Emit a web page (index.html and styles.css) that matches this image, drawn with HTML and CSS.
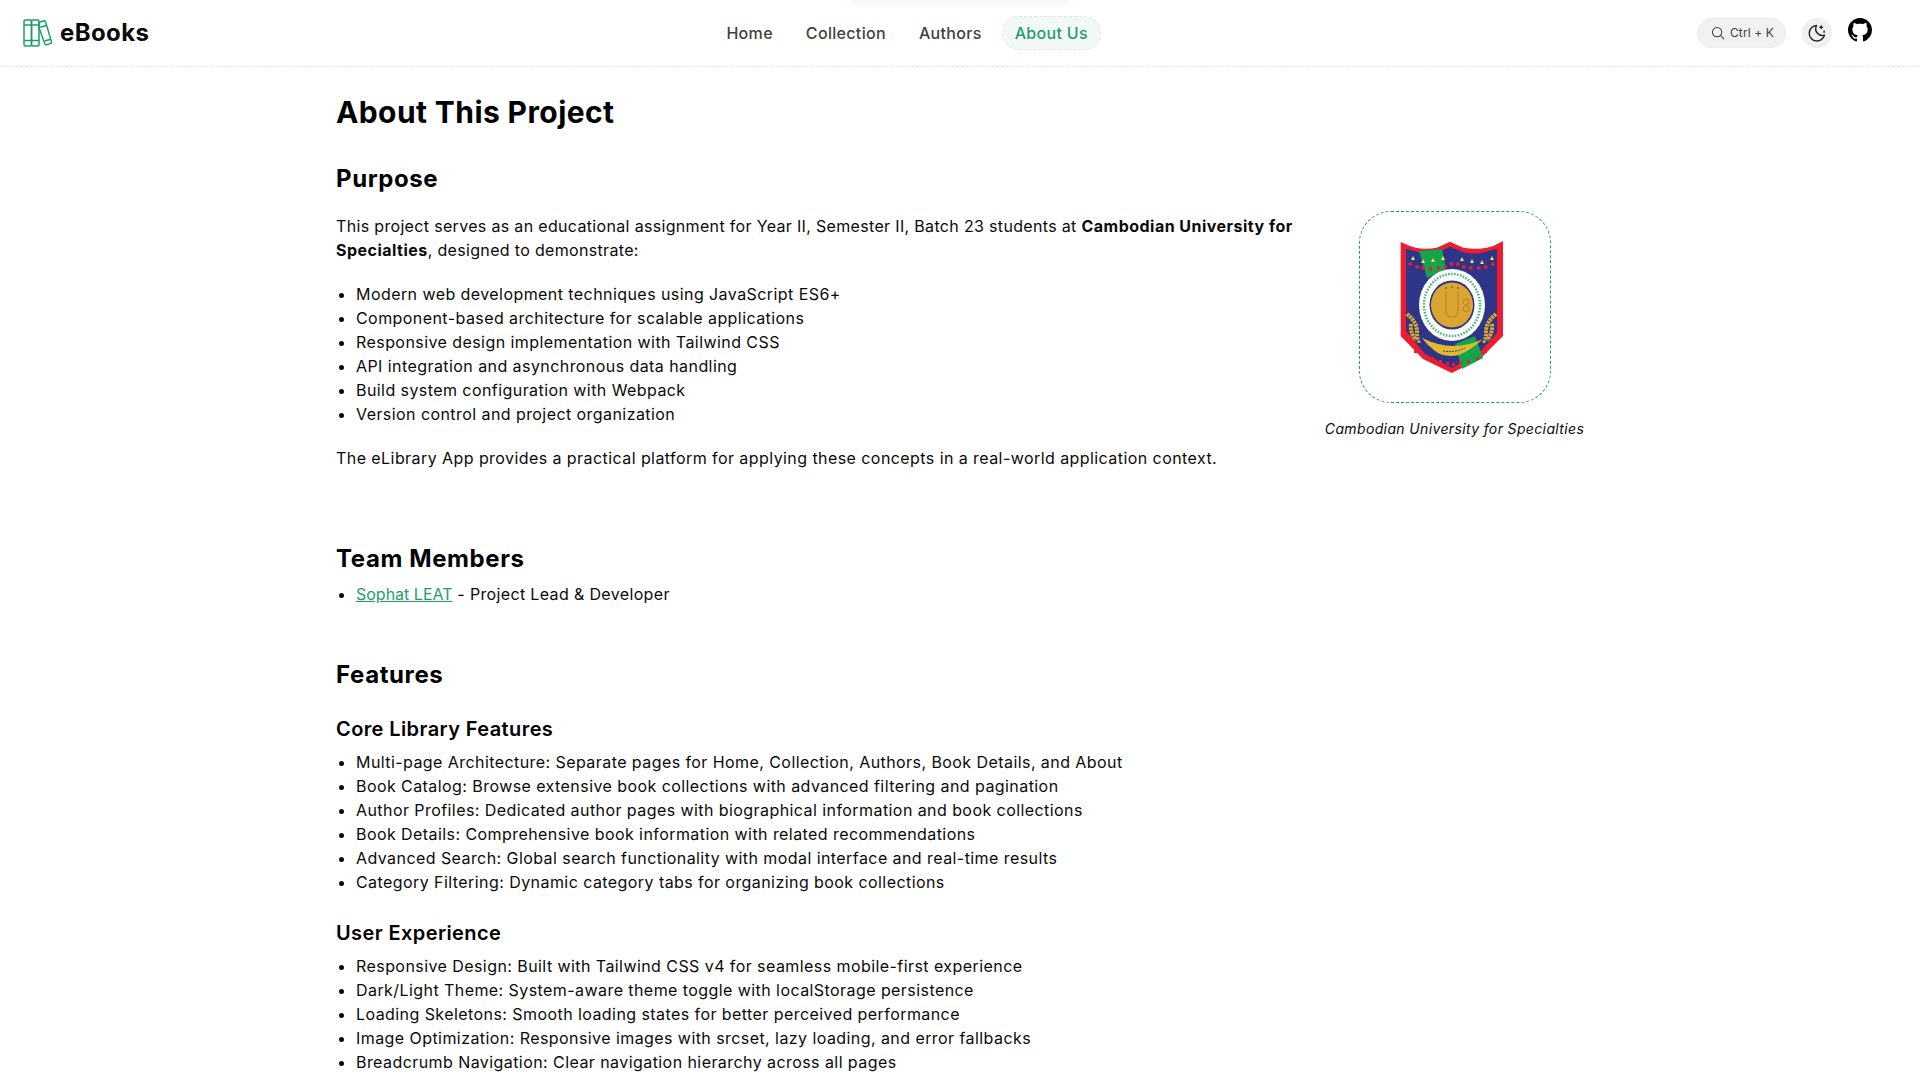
FILE: index.html
```html
<!DOCTYPE html>
<html lang="en">
	<head>
		<meta charset="utf-8">
		<title>About - eBooks</title>
		<link rel="stylesheet" href="styles.css">
	</head>
	<body>
		<div class="top-shadow"></div>
		<header class="topbar">
			<a class="brand" href="#">
				<svg class="brand-icon" viewBox="0 0 29 28" fill="none" stroke="#1f9d68" stroke-width="1.500" stroke-linejoin="round">
					<rect x="1" y="1" width="7.500" height="26" rx="1.500"/>
					<rect x="8.500" y="1" width="7.500" height="26" rx="1.500"/>
					<path d="M1 6h15M1 21.500h15"/>
					<path d="M16 3.500l4.800-1.800q1.200-.3 1.700.9l6 20.200q.3 1.200-.8 1.600l-4.200 1.300q-1.200.3-1.600-.8L16 8.500z"/>
					<path d="M17.200 8.300l6-1.800M21.800 22l5.800-1.800"/>
				</svg>
				<span>eBooks</span>
			</a>
			<nav class="nav">
				<a href="#">Home</a>
				<a href="#">Collection</a>
				<a href="#">Authors</a>
				<a href="#" class="active">About Us</a>
			</nav>
			<div class="tools">
				<button class="search">
					<svg viewBox="0 0 24 24" fill="none" stroke="#444" stroke-width="1.800" stroke-linecap="round"><circle cx="10.500" cy="10.500" r="8"/><path d="M22 22l-5.800-5.800"/></svg>
					<span>Ctrl + K</span>
				</button>
				<button class="theme">
					<svg viewBox="0 0 24 24" fill="none" stroke="#222" stroke-width="1.700" stroke-linecap="round" stroke-linejoin="round"><path d="M11.500 3a9.300 9.300 0 1 0 9.500 11.500 8 8 0 0 1-9.500-11.500z"/><path d="M17 3.500v3M15.500 5h3M20.500 9.500v1.500"/></svg>
				</button>
				<svg class="github" viewBox="0 0 16 16" fill="#000"><path d="M8 0C3.580 0 0 3.580 0 8c0 3.540 2.290 6.530 5.470 7.590.4.070.55-.17.55-.38 0-.19-.01-.82-.01-1.490-2.010.37-2.530-.49-2.690-.94-.09-.23-.48-.94-.82-1.130-.28-.15-.68-.52-.01-.53.630-.01 1.080.58 1.230.82.720 1.210 1.870.87 2.330.66.070-.52.280-.87.510-1.070-1.780-.2-3.640-.89-3.640-3.950 0-.87.310-1.590.82-2.150-.08-.2-.36-1.020.08-2.120 0 0 .67-.21 2.200.82.640-.18 1.320-.27 2-.27s1.360.09 2 .27c1.530-1.040 2.200-.82 2.200-.82.440 1.100.16 1.920.08 2.120.51.560.82 1.270.82 2.150 0 3.070-1.870 3.750-3.650 3.950.29.250.54.730.54 1.480 0 1.070-.01 1.930-.01 2.200 0 .21.150.46.550.38A8.010 8.010 0 0 0 16 8c0-4.420-3.580-8-8-8z"/></svg>
			</div>
		</header>

		<main class="page">
			<h1>About This Project</h1>

			<section class="purpose">
				<h2>Purpose</h2>
				<div class="purpose-row">
					<div class="purpose-text">
						<p class="intro">This project serves as an educational assignment for Year II, Semester II, Batch 23 students at <strong>Cambodian University for Specialties</strong>, designed to demonstrate:</p>
						<ul>
							<li>Modern web development techniques using JavaScript ES6+</li>
							<li>Component-based architecture for scalable applications</li>
							<li>Responsive design implementation with Tailwind CSS</li>
							<li>API integration and asynchronous data handling</li>
							<li>Build system configuration with Webpack</li>
							<li>Version control and project organization</li>
						</ul>
						<p>The eLibrary App provides a practical platform for applying these concepts in a real-world application context.</p>
					</div>
					<figure class="crest">
						<div class="crest-box">
							<svg class="crest-logo" viewBox="0 0 105 133">
								<!-- shield -->
								<path d="M1.700 1L11 5q6.500 2.500 13 2.700 7 .4 13.700-1L51 .7l13.300 6q8 1.500 16.700 1 7-.5 13.300-2.700L104 0v95l-23 23-28.300 14-28.700-14-22.300-23z" fill="#ed1c2e"/>
								<path d="M7 7.700l17 4.600q7 .5 13.700-.6L51 5.700l15 6q8 1 15 .6l17-4.600V92l-19 21-26.300 14-26.700-14-19-23z" fill="#2e3589"/>
								<path d="M20 10l23-2 4 20-19 9zM56 103l20-8 8 22-21 11z" fill="#12a54b"/>
								<!-- dots -->
								<g fill="#ed1c2e">
									<rect x="9.500" y="21.500" width="3.500" height="3"/><rect x="16.500" y="24.500" width="3.500" height="3"/><rect x="22.500" y="25.500" width="3.500" height="3"/><rect x="29.500" y="26.500" width="3.500" height="3"/><rect x="37.500" y="25.500" width="3.500" height="3"/><rect x="44.500" y="24.500" width="3.500" height="3"/><rect x="51" y="21.500" width="3.500" height="3"/><rect x="57" y="21.500" width="3.500" height="3"/><rect x="63" y="24.500" width="3.500" height="3"/><rect x="70" y="25.500" width="3.500" height="3"/><rect x="78" y="25.500" width="3.500" height="3"/><rect x="85" y="24.500" width="3.500" height="3"/><rect x="92" y="21.500" width="3.500" height="3"/>
									<rect x="15" y="109" width="3" height="3"/><rect x="23" y="113" width="3" height="3"/><rect x="32" y="116" width="3" height="3"/><rect x="40" y="119" width="3" height="3"/><rect x="47" y="121" width="3" height="3"/><rect x="53" y="122" width="3" height="3"/><rect x="60" y="120" width="3" height="3"/><rect x="68" y="119" width="3" height="3"/><rect x="77" y="116" width="3" height="3"/><rect x="85" y="109" width="3" height="3"/>
								</g>
								<g fill="#f4e04d">
									<path d="M14 15l2 4h-4zM24 18l2 4h-4zM34 17l2 4h-4zM44 15l2 4h-4zM63 16l2 4h-4zM73 18l2 4h-4zM83 19l2 4h-4zM93 15l2 4h-4z"/>
								</g>
								<!-- seal -->
								<ellipse cx="53" cy="64" rx="33" ry="36" fill="#fff"/>
								<ellipse cx="53" cy="64" rx="28" ry="31" fill="none" stroke="#3cb56f" stroke-width="2.500" stroke-dasharray="1.500 1.500"/>
								<ellipse cx="53" cy="64" rx="22.500" ry="24.500" fill="#2e3589"/>
								<ellipse cx="53" cy="64" rx="21" ry="22.500" fill="#dba532"/>
								<path d="M47 51v18q0 7 6 7t6-7V51" fill="none" stroke="#c08c2c" stroke-width="1.500"/>
								<path d="M46 47h2M52 46h2M58 47h2" stroke="#8a6a20" stroke-width="1.500"/>
								<circle cx="67" cy="61" r="3" fill="none" stroke="#b9802a"/><circle cx="67" cy="68" r="3" fill="none" stroke="#b9802a"/>
								<!-- sheaves and ribbon -->
								<g fill="none" stroke="#d9ab2b" stroke-width="4" stroke-dasharray="2.500 .8">
									<path d="M8 73q10 8 10 18t3 9"/>
									<path d="M12 83q-1 9 5 16"/>
									<path d="M97 73q-10 8-10 18t-3 9"/>
									<path d="M93 83q1 9-5 16"/>
								</g>
								<path d="M23 97q17 8 31 8 16 0 30-7-12 11-24 16-15 3-24-4-8-6-13-13z" fill="#e3b92f"/>
								<path d="M44 110q12 2 22-3" fill="none" stroke="#2e3589" stroke-dasharray="2 1"/>
							</svg>
						</div>
						<figcaption>Cambodian University for Specialties</figcaption>
					</figure>
				</div>
			</section>

			<section class="team">
				<h2>Team Members</h2>
				<ul>
					<li><a href="#">Sophat LEAT</a> - Project Lead &amp; Developer</li>
				</ul>
			</section>

			<section class="features">
				<h2>Features</h2>
				<h3>Core Library Features</h3>
				<ul>
					<li>Multi-page Architecture: Separate pages for Home, Collection, Authors, Book Details, and About</li>
					<li>Book Catalog: Browse extensive book collections with advanced filtering and pagination</li>
					<li>Author Profiles: Dedicated author pages with biographical information and book collections</li>
					<li>Book Details: Comprehensive book information with related recommendations</li>
					<li>Advanced Search: Global search functionality with modal interface and real-time results</li>
					<li>Category Filtering: Dynamic category tabs for organizing book collections</li>
				</ul>
				<h3>User Experience</h3>
				<ul>
					<li>Responsive Design: Built with Tailwind CSS v4 for seamless mobile-first experience</li>
					<li>Dark/Light Theme: System-aware theme toggle with localStorage persistence</li>
					<li>Loading Skeletons: Smooth loading states for better perceived performance</li>
					<li>Image Optimization: Responsive images with srcset, lazy loading, and error fallbacks</li>
					<li>Breadcrumb Navigation: Clear navigation hierarchy across all pages</li>
				</ul>
			</section>
		</main>
	</body>
</html>
```
FILE: styles.css
```css
* {
	box-sizing: border-box;
}

html, body {
	height: 1080px;
	overflow: hidden;
}

body {
	margin: 0;
	background: #fff;
	color: #0a0a0a;
	font-family: Inter, "Open Sans", sans-serif;
	font-size: 16px;
	line-height: 24px;
	letter-spacing: 0.43px;
}

a {
	text-decoration: none;
	color: inherit;
}

.top-shadow {
	position: absolute;
	top: -20px;
	left: 850px;
	width: 220px;
	height: 20px;
	box-shadow: 0 2px 8px rgba(0, 0, 0, 0.06);
}

.topbar {
	height: 67px;
	padding: 0 48px 1px 23px;
	display: flex;
	align-items: center;
	border-bottom: 1px dashed #e5e5e5;
}

.brand {
	display: flex;
	align-items: center;
	gap: 8px;
	font-size: 24px;
	font-weight: 700;
	letter-spacing: 0.4px;
	color: #0a0a0a;
}

.brand-icon {
	width: 29px;
	height: 28px;
}

.nav {
	margin-left: 564px;
	display: flex;
	align-items: center;
	gap: 7px;
	color: #404040;
	font-weight: 500;
	letter-spacing: 0.32px;
}

.nav a {
	padding: 4px 12px;
	border: 1px dashed transparent;
	border-radius: 18px;
}

.nav a.active {
	color: #1f9d68;
	background: #f2f8f5;
	border-color: #dcebe4;
}

.tools {
	margin-left: auto;
	display: flex;
	align-items: center;
}

.search {
	display: flex;
	align-items: center;
	gap: 5px;
	width: 89px;
	height: 30px;
	padding: 0 0 0 13px;
	border: 1px solid #ececec;
	border-radius: 15px;
	background: #f1f1f1;
	color: #404040;
	font-family: inherit;
	font-size: 12px;
	letter-spacing: 0.1px;
}

.search svg {
	width: 14px;
	height: 14px;
}

.theme {
	margin-left: 16px;
	width: 30px;
	height: 30px;
	padding: 0;
	display: flex;
	align-items: center;
	justify-content: center;
	border: 1px solid #ececec;
	border-radius: 50%;
	background: #f1f1f1;
}

.theme svg {
	width: 20px;
	height: 20px;
}

.github {
	margin-left: 16px;
	width: 24px;
	height: 24px;
	margin-top: -6px;
}

.page {
	width: 1248px;
	margin: 0 auto;
}

h1 {
	margin: 23px 0 0;
	font-size: 30px;
	line-height: 44px;
	font-weight: 700;
	letter-spacing: 0.4px;
	color: #000;
}

h2 {
	margin: 0;
	font-size: 24px;
	line-height: 32px;
	font-weight: 700;
	letter-spacing: 0.6px;
	color: #000;
}

h3 {
	margin: 0;
	font-size: 20px;
	line-height: 28px;
	font-weight: 600;
	letter-spacing: 0.4px;
	color: #000;
}

p {
	margin: 0;
}

ul {
	margin: 0;
	padding-left: 20px;
}

.purpose {
	margin-top: 29px;
}

.purpose-row {
	display: flex;
	gap: 24px;
	margin-top: 16px;
}

.purpose-text {
	flex: 1;
	padding-top: 3px;
}

.intro {
	letter-spacing: 0.33px;
}

.intro strong {
	letter-spacing: 0.48px;
}

.purpose-text ul {
	margin: 20px 0;
}

.crest {
	margin: 0;
	width: 259px;
	display: flex;
	flex-direction: column;
	align-items: center;
}

.crest-box {
	width: 192px;
	height: 192px;
	display: flex;
	align-items: center;
	justify-content: center;
	border: 1px dashed #1f9d68;
	border-radius: 32px;
}

.crest-logo {
	width: 105px;
	height: 133px;
	margin-right: 6px;
}

.crest figcaption {
	margin-top: 16px;
	font-size: 14px;
	line-height: 20px;
	font-style: italic;
	letter-spacing: 0.36px;
	white-space: nowrap;
}

.team {
	margin-top: 73px;
}

.team ul {
	margin-top: 7px;
}

.team li {
	letter-spacing: 0.35px;
}

.team a {
	color: #1f9d68;
	text-decoration: underline;
	letter-spacing: 0;
}

.features {
	margin-top: 53px;
}

.features h3 {
	margin-top: 24px;
}

.features ul + h3 {
	margin-top: 25px;
}

.features h3 + ul {
	margin-top: 7px;
}
```
